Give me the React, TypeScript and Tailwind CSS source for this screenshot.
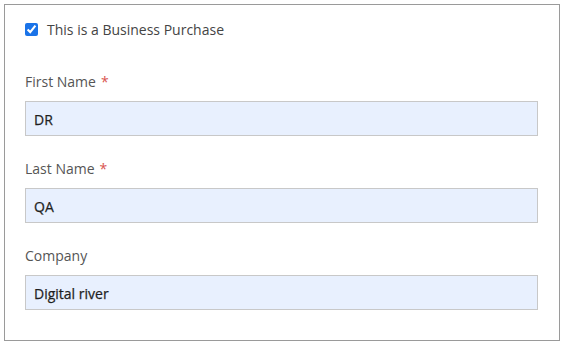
export default function App() {
  const fields = [
    { label: "First Name", required: true, value: "DR" },
    { label: "Last Name", required: true, value: "QA" },
    { label: "Company", required: false, value: "Digital river" },
  ];
  return (
    <div className="w-[575px] h-[345px] bg-white pt-[4px] pl-[4px]" style={{ fontFamily: '"Open Sans", sans-serif' }}>
      <div className="w-[556px] h-[337px] border border-[#9a9a9a] pl-[20px] pr-[21px] pt-[14px]">
        <label className="flex items-center h-[20px] text-[14px] text-[#444]">
          <input type="checkbox" defaultChecked className="w-[13px] h-[13px] m-0 accent-[#1a73e8]" />
          <span className="ml-[9px]">This is a Business Purchase</span>
        </label>
        <div className="mt-[33px] flex flex-col">
          {fields.map((f, i) => (
            <div key={f.label} className={i > 0 ? "mt-[23px]" : ""}>
              <div className="h-[20px] leading-[20px] text-[14px] text-[#555]">
                {f.label}
                {f.required && <span className="text-[#d9534f] ml-[5px]">*</span>}
              </div>
              <div className="mt-[9px] h-[35px] border border-[#c8c8c8] bg-[#e8f0fe] flex items-center pl-[8px] pt-[2px] text-[14px] text-[#1f1f1f] [-webkit-text-stroke:0.25px_#1f1f1f]">
                {f.value}
              </div>
            </div>
          ))}
        </div>
      </div>
    </div>
  );
}
